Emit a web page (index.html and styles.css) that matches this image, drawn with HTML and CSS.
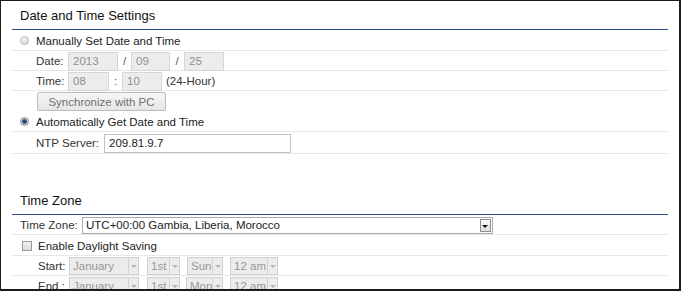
FILE: index.html
```html
<!DOCTYPE html>
<html>
<head>
<meta charset="utf-8">
<link rel="stylesheet" href="styles.css">
</head>
<body>
<div class="frame">
  <section class="section">
    <h2 class="heading">Date and Time Settings</h2>
    <div class="row opt tall">
      <span class="radio"></span><span>Manually Set Date and Time</span>
    </div>
    <div class="row sub">
      <span class="lbl w32">Date:</span>
      <span class="field dis w50">2013</span>
      <span class="sep">/</span>
      <span class="field dis w39">09</span>
      <span class="sep w14">/</span>
      <span class="field dis w40">25</span>
    </div>
    <div class="row sub">
      <span class="lbl w32">Time:</span>
      <span class="field dis w41">08</span>
      <span class="sep">:</span>
      <span class="field dis w40">10</span>
      <span class="hint">(24-Hour)</span>
    </div>
    <div class="row sub tall plain">
      <button class="btn" type="button">Synchronize with PC</button>
    </div>
    <div class="row opt tall">
      <span class="radio on"></span><span>Automatically Get Date and Time</span>
    </div>
    <div class="row sub ntp">
      <span class="lbl w68">NTP Server:</span>
      <span class="field w187">209.81.9.7</span>
    </div>
  </section>

  <section class="section tz">
    <h2 class="heading">Time Zone</h2>
    <div class="row opt">
      <span class="lbl w62">Time Zone:</span>
      <span class="select w411"><span class="sel-text">UTC+00:00 Gambia, Liberia, Morocco</span><span class="arrow dark"></span></span>
    </div>
    <div class="row chk tall">
      <span class="checkbox"></span><span>Enable Daylight Saving</span>
    </div>
    <div class="row sub2">
      <span class="lbl w31">Start:</span>
      <span class="select dis w70"><span class="sel-text">January</span><span class="arrow"></span></span>
      <span class="select dis w33 g8"><span class="sel-text">1st</span><span class="arrow"></span></span>
      <span class="select dis w36 g7"><span class="sel-text">Sun</span><span class="arrow"></span></span>
      <span class="select dis w48 g7"><span class="sel-text">12 am</span><span class="arrow"></span></span>
    </div>
    <div class="row sub2">
      <span class="lbl w31">End :</span>
      <span class="select dis w70"><span class="sel-text">January</span><span class="arrow"></span></span>
      <span class="select dis w33 g8"><span class="sel-text">1st</span><span class="arrow"></span></span>
      <span class="select dis w37 g6"><span class="sel-text">Mon</span><span class="arrow"></span></span>
      <span class="select dis w48 g7"><span class="sel-text">12 am</span><span class="arrow"></span></span>
    </div>
  </section>
</div>
</body>
</html>
```

FILE: styles.css
```css
* { box-sizing: border-box; }
html, body { margin: 0; padding: 0; background: #fff; }
body {
  font-family: "Liberation Sans", Arial, sans-serif;
  font-size: 11.5px;
  color: #222;
}
.frame {
  width: 681px;
  height: 291px;
  border-top: 1px solid #1c1c1c;
  border-left: 1px solid #1c1c1c;
  border-right: 2px solid #1c1c1c;
  border-bottom: 2px solid #1c1c1c;
  padding: 0 11px;
  overflow: hidden;
}
.heading {
  margin: 0;
  height: 29px;
  padding-left: 8px;
  display: flex;
  align-items: center;
  font-size: 13px;
  font-weight: normal;
  color: #111;
  border-bottom: 1px solid #2b4e8c;
}
.tz { margin-top: 32px; }
.row {
  display: flex;
  align-items: center;
  height: 20px;
  padding-top: 1px;
  border-bottom: 1px solid #e8e8e8;
  white-space: nowrap;
}
.row.tall { height: 21px; }
.row.plain { border-bottom: none; height: 20px; padding-top: 0; }
.row.ntp { height: 22px; }
.opt { padding-left: 8px; }
.sub { padding-left: 24px; }
.sub2 { padding-left: 26px; }
.chk { padding-left: 10px; }
.lbl { color: #333; }
.w31 { width: 31px; }
.w32 { width: 32px; }
.w62 { width: 62px; }
.w68 { width: 68px; }
.radio {
  width: 9px;
  height: 9px;
  border-radius: 50%;
  margin-right: 7px;
  border: 1px solid #b9b9b9;
  background: radial-gradient(circle at 40% 35%, #f4f4f4, #d2d2d2);
  flex: none;
}
.radio.on {
  border-color: #8c8c8c;
  background: radial-gradient(circle, #1f3c6e 0, #2d4f88 2px, #c9c9c9 2.6px, #e2e2e2 100%);
}
.checkbox {
  width: 10px;
  height: 10px;
  margin-right: 6px;
  border: 1px solid #9a9a9a;
  background: linear-gradient(#f2f2f2, #dcdcdc);
  flex: none;
}
.field {
  display: flex;
  align-items: center;
  height: 19px;
  padding-left: 4px;
  border: 1px solid #c4c4c4;
  background: #fff;
  color: #222;
  flex: none;
}
.field.dis {
  background: #ececec;
  border-color: #d6d6d6;
  color: #8f8f8f;
}
.w39 { width: 39px; }
.w40 { width: 40px; }
.w41 { width: 41px; }
.w50 { width: 50px; }
.w187 { width: 187px; }
.sep {
  width: 13px;
  text-align: center;
  color: #555;
  flex: none;
}
.sep.w14 { width: 14px; }
.hint { margin-left: 4px; color: #333; }
.btn {
  width: 129px;
  height: 19px;
  margin: 1px 0 0 1px;
  padding: 0;
  font-family: "Liberation Sans", Arial, sans-serif;
  font-size: 11.5px;
  color: #707070;
  border: 1px solid #bcbcbc;
  border-radius: 2px;
  background: linear-gradient(#f6f6f6, #e6e6e6);
}
.select {
  display: flex;
  align-items: stretch;
  height: 17px;
  border: 1px solid #a9a9a9;
  background: #fff;
  flex: none;
}
.select.dis {
  height: 18px;
  border-color: #d0d0d0;
  background: #ececec;
  color: #969696;
}
.sel-text {
  flex: 1;
  display: flex;
  align-items: center;
  padding-left: 3px;
  overflow: hidden;
}
.arrow {
  width: 10px;
  flex: none;
  position: relative;
  border-left: 1px solid #d4d4d4;
  background: #ededed;
}
.arrow::after {
  content: "";
  position: absolute;
  left: 2px;
  top: 7px;
  border-left: 3px solid transparent;
  border-right: 3px solid transparent;
  border-top: 3px solid #b4b4b4;
}
.arrow.dark {
  width: 11px;
  margin: 1px 1px 1px 0;
  border: 1px solid #8e8e8e;
  background: linear-gradient(#f8f8f8, #dedede);
}
.arrow.dark::after {
  left: 1px;
  top: 5px;
  border-top-color: #111;
}
.w33 { width: 33px; }
.w36 { width: 36px; }
.w37 { width: 37px; }
.w48 { width: 48px; }
.w70 { width: 70px; }
.w411 { width: 411px; }
.g6 { margin-left: 6px; }
.g7 { margin-left: 7px; }
.g8 { margin-left: 8px; }
```
